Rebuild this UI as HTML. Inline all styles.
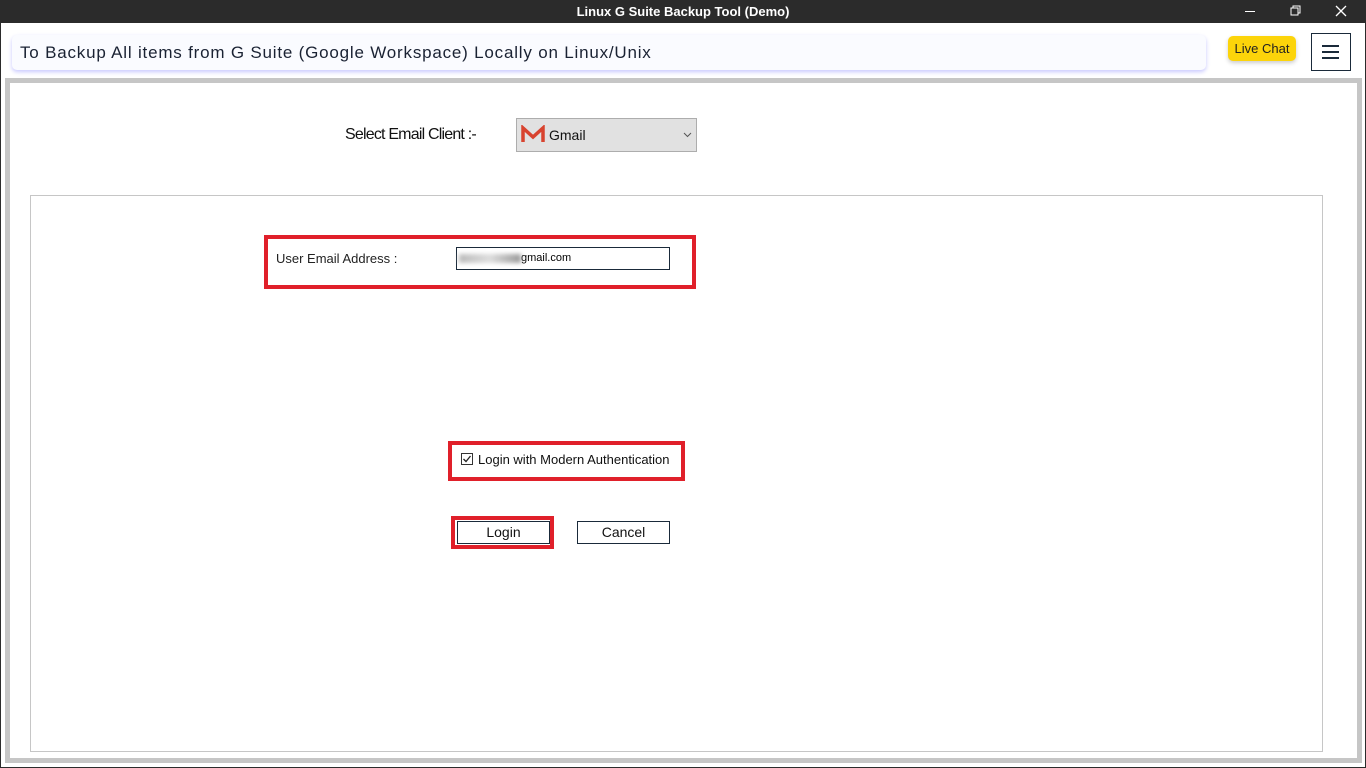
<!DOCTYPE html>
<html><head><style>
body{margin:0;width:1366px;height:768px;background:#2b2b2b;position:relative;overflow:hidden;font-family:"Liberation Sans",Arial,sans-serif}
.win{position:absolute;left:1px;top:23px;width:1364px;height:744px;background:#fff}
.t{position:absolute;top:0;left:0;width:1366px;height:23px;color:#fff;font-weight:bold;font-size:13px;text-align:center;line-height:23px}
.hdr{position:absolute;left:12px;top:35px;width:1194px;height:35px;background:#fafbff;border-radius:5px;box-shadow:0 2px 4px #c9c9ff;font-size:17px;line-height:35px;padding-left:8px;box-sizing:border-box;color:#1a2233;letter-spacing:.8px}
.frame{position:absolute;left:5px;top:78px;width:1357px;height:685px;box-sizing:border-box;border:5px solid #c6c6c6;background:#fff}
.inner{position:absolute;left:30px;top:195px;width:1293px;height:557px;box-sizing:border-box;border:1px solid #c6c6c6}
.red{position:absolute;border:4px solid #e0202a;box-sizing:border-box}
</style></head><body>
<div class="t">Linux G Suite Backup Tool (Demo)</div>
<svg style="position:absolute;left:1236px;top:2px" width="130" height="20"><line x1="9" y1="9.5" x2="19" y2="9.5" stroke="#fff"/><rect x="55" y="6" width="7" height="7" fill="none" stroke="#fff"/><path d="M57 6V4h7v7h-2" fill="none" stroke="#fff"/><path d="M100 4l10 10M110 4l-10 10" stroke="#fff" stroke-width="1.3"/></svg>
<div class="win"></div>
<div class="hdr">To Backup All items from G Suite (Google Workspace) Locally on Linux/Unix</div>
<div style="position:absolute;left:1228px;top:36px;width:68px;height:25px;background:#fcd40a;border-radius:5px;box-shadow:0 2px 4px #ccc;font-size:13px;line-height:25px;text-align:center;color:#222">Live Chat</div>
<div style="position:absolute;left:1311px;top:33px;width:40px;height:38px;border:1px solid #1a2a3a;box-sizing:border-box"><div style="position:absolute;left:10px;top:11px;width:17px;height:2px;background:#1a2a3a;box-shadow:0 6px #1a2a3a,0 12px #1a2a3a"></div></div>
<div class="frame"></div>
<div style="position:absolute;left:345px;top:126px;font-size:16px;color:#111;letter-spacing:-.8px">Select Email Client :-</div>
<div style="position:absolute;left:516px;top:118px;width:181px;height:34px;box-sizing:border-box;border:1px solid #adadad;background:#e1e1e1">
<svg style="position:absolute;left:4px;top:6px" width="24" height="19"><path d="M2 17V3l10 9 10-9v14" fill="none" stroke="#d8432f" stroke-width="3.5" stroke-linejoin="miter"/></svg>
<span style="position:absolute;left:32px;top:8px;font-size:14px;color:#111">Gmail</span>
<svg style="position:absolute;left:166px;top:13px" width="9" height="6"><path d="M1 1l3.5 3.5L8 1" fill="none" stroke="#555"/></svg></div>
<div class="inner"></div>
<div class="red" style="left:264px;top:235px;width:432px;height:54px"></div>
<div style="position:absolute;left:276px;top:251px;font-size:13px;color:#222">User Email Address :</div>
<div style="position:absolute;left:456px;top:247px;width:214px;height:23px;box-sizing:border-box;border:1px solid #1a2a3a;font-size:11px;line-height:21px"><span style="display:inline-block;width:62px;height:9px;background:linear-gradient(90deg,#bbb,#ddd,#999);filter:blur(2px);vertical-align:middle;margin-left:2px"></span>gmail.com</div>
<div class="red" style="left:448px;top:441px;width:237px;height:40px"></div>
<div style="position:absolute;left:461px;top:453px;width:12px;height:12px;border:1px solid #333;box-sizing:border-box"><svg width="10" height="10" style="position:absolute;left:0;top:0"><path d="M1.5 5l2.5 2.5L8.5 2" fill="none" stroke="#222" stroke-width="1.3"/></svg></div>
<div style="position:absolute;left:478px;top:452px;font-size:13px;color:#111">Login with Modern Authentication</div>
<div class="red" style="left:451px;top:516px;width:103px;height:33px"></div>
<div style="position:absolute;left:457px;top:521px;width:93px;height:23px;border:1px solid #1a2a3a;box-sizing:border-box;font-size:14px;text-align:center;line-height:21px;color:#111">Login</div>
<div style="position:absolute;left:577px;top:521px;width:93px;height:23px;border:1px solid #1a2a3a;box-sizing:border-box;font-size:14px;text-align:center;line-height:21px;color:#111">Cancel</div>
</body></html>
